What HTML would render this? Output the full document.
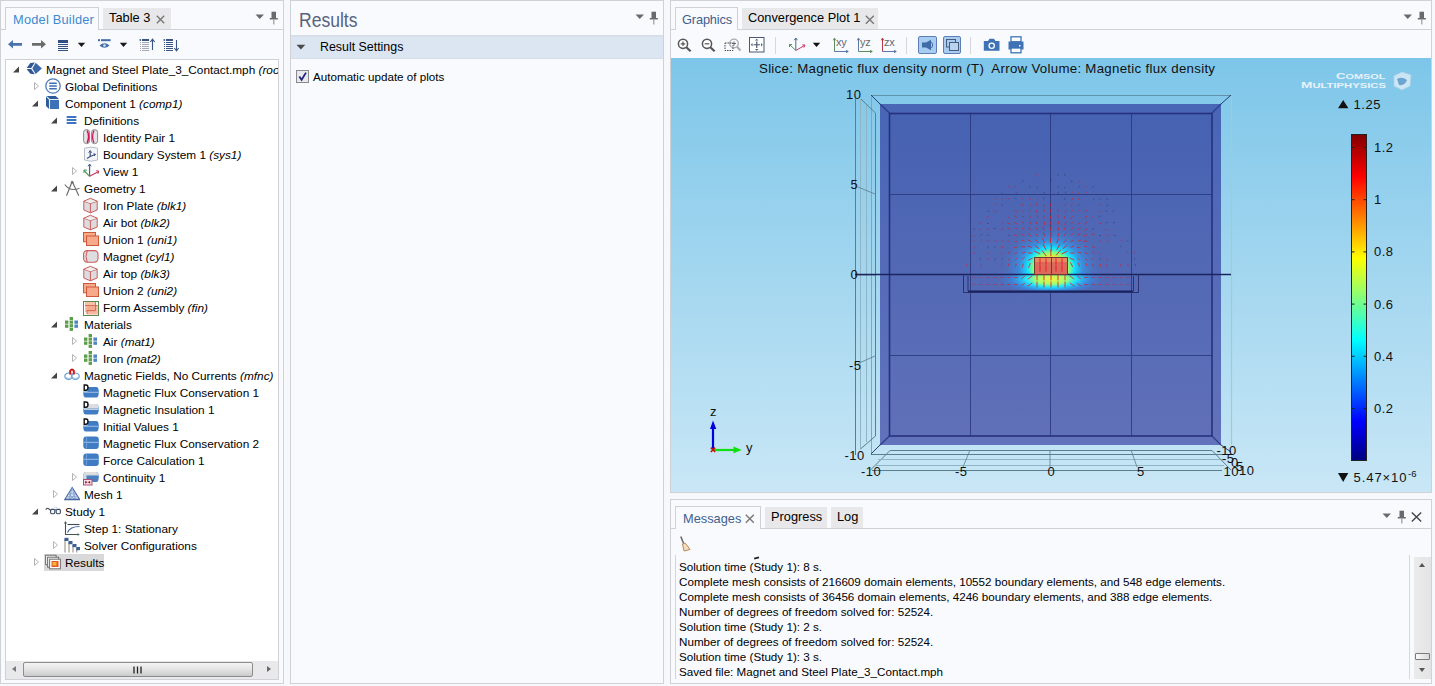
<!DOCTYPE html>
<html><head><meta charset="utf-8">
<style>
*{margin:0;padding:0;box-sizing:border-box}
html,body{width:1435px;height:686px;overflow:hidden;background:#f7f8fc;font-family:"Liberation Sans",sans-serif;font-size:11.65px;color:#000}
.abs{position:absolute}
.panel{position:absolute;border:1px solid #cfd1d7;background:#f9fafe}
.tabline{position:absolute;height:1px;background:#cfd1d7}
.tab{position:absolute;border:1px solid #cfd1d7;border-bottom:none;background:#f9fafe;font-size:12.8px;white-space:nowrap}
.itab{position:absolute;background:#e8e8ea;font-size:12.8px;white-space:nowrap}
.t{position:absolute;white-space:nowrap;line-height:15px}
.row{position:absolute;height:17px;line-height:17px;white-space:nowrap;font-size:11.8px}
i{font-style:italic}
svg{position:absolute;overflow:visible}
</style></head><body>
<svg width="0" height="0" style="position:absolute;left:0;top:0">
<defs>
<symbol id="i-root" viewBox="0 0 16 17">
 <path d="M0.6 6.9L4.4 2L8.8 1.5L5.2 6.9Z" fill="#2f5693"/>
 <path d="M0.6 7.9L5.2 7.9L8.8 13.3L4.4 12.8Z" fill="#2f5693"/>
 <path d="M6.3 7.4L9.7 1.8L15.9 7.4L9.7 13Z" fill="#3a67a8"/>
</symbol>
<symbol id="i-glob" viewBox="0 0 16 17">
 <circle cx="8" cy="8" r="7.2" fill="#fff" stroke="#4d7ab9" stroke-width="1.3"/>
 <path d="M4.2 5.3H11.8M4.2 8H11.8M4.2 10.7H11.8" stroke="#3d70b6" stroke-width="1.6"/>
</symbol>
<symbol id="i-comp" viewBox="0 0 16 17">
 <path d="M1 1H10.7L13.9 4V13.9H4L1 11Z" fill="#2f5a98"/>
 <rect x="5.1" y="5.1" width="8.8" height="8.8" fill="#3d72ba"/>
 <path d="M1.4 1.4L4.5 4.5H13.9M4.5 4.5V13.9" stroke="#e6f0fa" stroke-width="1.1" fill="none"/>
</symbol>
<symbol id="i-defs" viewBox="0 0 16 17">
 <path d="M2.7 5H12.4M2.7 8H12.4M2.7 11H12.4" stroke="#3d74bd" stroke-width="1.8"/>
</symbol>
<symbol id="i-idp" viewBox="0 0 16 17">
 <rect x="0.6" y="0.6" width="6" height="14" rx="2.8" fill="#e4e4e6" stroke="#888" stroke-width="1"/>
 <rect x="8.6" y="0.6" width="6" height="14" rx="2.8" fill="#e4e4e6" stroke="#888" stroke-width="1"/>
 <path d="M4.2 1.5Q7 7.6 4.2 13.8" stroke="#d4145a" stroke-width="1.6" fill="none"/>
 <path d="M11 1.5Q8.2 7.6 11 13.8" stroke="#d4145a" stroke-width="1.3" fill="none"/>
</symbol>
<symbol id="i-bsys" viewBox="0 0 16 17">
 <path d="M1.5 2.2Q8 0 14.5 2.2V14Q8 16.5 1.5 14Z" fill="#f4f6fa" stroke="#b6bcc6" stroke-width="1"/>
 <path d="M4 12.5L7.2 10.5V5.5M7.2 10.5L12 8.5" stroke="#3b4f80" stroke-width="1.2" fill="none"/>
 <path d="M5.7 6.7L7.2 4.5L8.7 6.7M10.5 7.7L12.5 8.3L11.2 10" stroke="#3b4f80" stroke-width="1" fill="none"/>
</symbol>
<symbol id="i-view" viewBox="0 0 16 17">
 <path d="M6.6 13.3V1.5" stroke="#4a6694" stroke-width="1.2"/>
 <path d="M5 3.3L6.6 1L8.2 3.3" stroke="#4a6694" stroke-width="1" fill="none"/>
 <path d="M6.6 13.3L1 7.5" stroke="#4f9a5a" stroke-width="1.2"/>
 <path d="M1 10L1 7L4 7.2" stroke="#4f9a5a" stroke-width="1" fill="none"/>
 <path d="M6.6 13.3L16 8.3" stroke="#c83c64" stroke-width="1.2"/>
 <path d="M13.2 7.6L16 8.3L14.8 10.8" stroke="#c83c64" stroke-width="1" fill="none"/>
</symbol>
<symbol id="i-geom" viewBox="0 0 16 17">
 <path d="M8.2 1.5L2.5 15.8M8.2 1.5L14.8 15.8" stroke="#707070" stroke-width="1.2" fill="none"/>
 <path d="M0.8 4.5Q6 12 15.5 8.2" stroke="#707070" stroke-width="1.1" fill="none"/>
 <circle cx="8.2" cy="2.2" r="1.3" fill="#707070"/>
</symbol>
<symbol id="i-blk" viewBox="0 0 16 17">
 <path d="M0.8 4.2L7.4 1.3L14.2 4.2V13L7.4 15.8L0.8 13Z" fill="#dcdcde" stroke="#cc5c5c" stroke-width="1"/>
 <path d="M0.8 4.2L7.4 6.6L14.2 4.2M7.4 6.6V15.8" stroke="#cc5c5c" stroke-width="1" fill="none"/>
 <path d="M1.8 4.6L7.4 2.3L13.2 4.6L7.4 6.2Z" fill="#eeeeef"/>
</symbol>
<symbol id="i-uni" viewBox="0 0 16 17">
 <rect x="0.5" y="1.5" width="12" height="9.3" fill="#f6aa8a" stroke="#d0583a" stroke-width="1"/>
 <rect x="3.5" y="5" width="12" height="9.5" fill="#f6aa8a" stroke="#d0583a" stroke-width="1"/>
</symbol>
<symbol id="i-cyl" viewBox="0 0 16 17">
 <rect x="0.6" y="2.6" width="14.4" height="11.6" rx="3.6" fill="#dedee0" stroke="#cc5c5c" stroke-width="1.1"/>
 <path d="M4.2 2.8Q1.8 8.4 4.2 14" stroke="#cc5c5c" stroke-width="1" fill="none"/>
</symbol>
<symbol id="i-fin" viewBox="0 0 16 17">
 <rect x="0.5" y="2.5" width="15" height="14" fill="#fffdf8" stroke="#5a8a52" stroke-width="1"/>
 <rect x="2" y="3" width="10.5" height="10" fill="#f8c0a8"/>
 <rect x="3.8" y="6" width="11" height="9.5" fill="#f4a48c" opacity="0.8"/>
 <path d="M2 6.5H14.5M3.5 11.5H12.5M12.5 3V11.5M4 12V15" stroke="#cf6a4e" stroke-width="0.9" fill="none"/>
</symbol>
<symbol id="i-mat" viewBox="0 0 16 17">
 <g fill="#5c9e4a"><rect x="1" y="4.5" width="3.4" height="3.3"/><rect x="1" y="8.5" width="3.4" height="3.3"/>
 <rect x="5.6" y="1" width="3.4" height="3.1"/><rect x="5.6" y="4.6" width="3.4" height="3.1"/><rect x="5.6" y="8.2" width="3.4" height="3.1"/><rect x="5.6" y="11.8" width="3.4" height="3.1"/></g>
 <g fill="#4f86c0"><rect x="10.4" y="4.5" width="3.6" height="3.3"/><rect x="10.4" y="8.5" width="3.6" height="3.3"/></g>
</symbol>
<symbol id="i-mfnc" viewBox="0 0 16 17">
 <ellipse cx="4.6" cy="9.2" rx="3.8" ry="3.2" fill="#fff" stroke="#6a9dd0" stroke-width="1.2"/>
 <ellipse cx="11.4" cy="9.2" rx="3.8" ry="3.2" fill="#fff" stroke="#6a9dd0" stroke-width="1.2"/>
 <path d="M1.5 10.5Q4.6 12.5 8 10.5Q11.4 12.5 14.5 10.5" stroke="#9cc0e6" stroke-width="1" fill="none"/>
 <path d="M6.2 7.5V3.8Q8 1 9.8 3.8V7.5" stroke="#d01818" stroke-width="2" fill="none"/>
 <path d="M8 7V11" stroke="#6a9dd0" stroke-width="1"/>
</symbol>
<symbol id="i-fd" viewBox="0 0 16 17">
 <path d="M4.5 3H13.2Q15.8 3 15.8 8Q15.8 13.6 13.2 13.6H2.8Q0.3 13.6 0.3 9.5V7.5H4.5Z" fill="#3f7cc3"/>
 <path d="M0.8 8.3H15.5" stroke="#a9c6ea" stroke-width="0.9"/>
 <path d="M1.2 1H3Q5 1 5 3.6Q5 6.3 3 6.3H1.2Z" fill="none" stroke="#111" stroke-width="1.4"/>
</symbol>
<symbol id="i-fdi" viewBox="0 0 16 17">
 <path d="M4.5 3H13.2Q15.8 3 15.8 8Q15.8 13.6 13.2 13.6H2.8Q0.3 13.6 0.3 9.5V7.5H4.5Z" fill="#3f7cc3"/>
 <path d="M4.5 3H13.2Q15.8 3 15.8 7.4H0.3V7.3H4.5Z" fill="#dcdde0"/>
 <path d="M0.8 8.3H15.5" stroke="#f0f0f0" stroke-width="0.9"/>
 <path d="M1.2 1H3Q5 1 5 3.6Q5 6.3 3 6.3H1.2Z" fill="none" stroke="#111" stroke-width="1.4"/>
</symbol>
<symbol id="i-fb" viewBox="0 0 16 17">
 <rect x="0.3" y="1.5" width="15.5" height="12.5" rx="3" fill="#3f7cc3"/>
 <path d="M0.8 7.3H15.5" stroke="#a9c6ea" stroke-width="0.9"/>
 <path d="M3.5 2V13.5" stroke="#7aa6dc" stroke-width="0.8"/>
</symbol>
<symbol id="i-cont" viewBox="0 0 16 17">
 <path d="M2.5 3H13.2Q15.8 3 15.8 8Q15.8 13 13.2 13H2.5Q0.3 13 0.3 8Q0.3 3 2.5 3Z" fill="#4a80c0"/>
 <path d="M2.5 3H13.2Q15.8 3 15.8 6.5H3.5V13H2.5Q0.3 13 0.3 8Q0.3 3 2.5 3Z" fill="#d4d9e0"/>
 <path d="M3 4.2H13" stroke="#efe8d8" stroke-width="1"/>
 <rect x="0.5" y="10.5" width="8.5" height="5.5" fill="#fbe0e6" stroke="#a85070" stroke-width="1"/>
 <path d="M2.2 11.8L4.6 13.25L2.2 14.7ZM7.2 11.8L4.8 13.25L7.2 14.7Z" fill="#8a1838"/>
</symbol>
<symbol id="i-mesh" viewBox="0 0 16 17">
 <path d="M8.2 1.5L15.8 13.8H0.6Z" fill="#d4e2f4" stroke="#46629e" stroke-width="1.1"/>
 <path d="M4.4 7.7H12M2.5 10.8H14M8.2 1.5L5 13.8M8.2 1.5L11.4 13.8M4.4 7.7L11.4 13.8M12 7.7L5 13.8" stroke="#7e9ccc" stroke-width="0.8" fill="none"/>
 <path d="M1 13.3H15.4" stroke="#46629e" stroke-width="1.2"/>
</symbol>
<symbol id="i-study" viewBox="0 0 16 17">
 <path d="M0.8 6.8Q1.8 4.8 3.2 5.6L6 7.4" stroke="#4a5468" stroke-width="1.2" fill="none"/>
 <rect x="5.6" y="6.4" width="4.2" height="4.4" rx="1.2" fill="#f4f8fc" stroke="#3e4a5e" stroke-width="1.1"/>
 <rect x="11.2" y="6.4" width="4.2" height="4.4" rx="1.2" fill="#f4f8fc" stroke="#3e4a5e" stroke-width="1.1"/>
 <path d="M9.8 7.6Q10.5 5.5 11.2 7.6" stroke="#5a7a9e" stroke-width="1.1" fill="none"/>
 <path d="M9.6 5L10.8 3.8L12 5" stroke="#b8d0e8" stroke-width="1" fill="none"/>
</symbol>
<symbol id="i-step" viewBox="0 0 16 17">
 <path d="M1.5 2V14.5H15" stroke="#46544e" stroke-width="1.1" fill="none"/>
 <path d="M0 3.4L1.5 1L3 3.4Z" fill="#46544e"/>
 <path d="M13.5 13L15.9 14.5L13.5 16Z" fill="#5a7a6a"/>
 <path d="M3.5 4.5H15.5" stroke="#3e4a58" stroke-width="1.1"/>
 <path d="M3.5 12.5Q6 6.5 15.5 6.5" stroke="#4a68a0" stroke-width="1.2" fill="none"/>
</symbol>
<symbol id="i-solv" viewBox="0 0 16 17">
 <path d="M1 2V15.5M5 5V15.5M9 8V15.5M12.8 11V15.5" stroke="#8c8478" stroke-width="1"/>
 <g fill="#3d5f94"><rect x="0.5" y="0.8" width="4" height="3.2"/><rect x="4.5" y="4" width="4" height="3.2"/><rect x="8.5" y="7" width="4" height="3.2"/><rect x="12.3" y="10" width="3.8" height="3.2"/></g>
</symbol>
<symbol id="i-res" viewBox="0 0 16 17">
 <rect x="0.6" y="1.2" width="10.5" height="9.5" fill="#f4f4f4" stroke="#707070" stroke-width="1"/>
 <rect x="2.6" y="3.2" width="11" height="10" fill="#f4f4f4" stroke="#707070" stroke-width="1"/>
 <rect x="4.6" y="5.2" width="10.8" height="9.6" fill="#fff" stroke="#707070" stroke-width="1"/>
 <rect x="6.5" y="7" width="7" height="6" fill="#e8552a"/>
 <rect x="7.5" y="8" width="4" height="3.5" fill="#f8b830"/>
</symbol>
</defs></svg>


<!-- ============ MODEL BUILDER PANEL ============ -->
<div class="panel" style="left:0;top:0;width:284px;height:684px"></div>
<div class="tabline" style="left:1px;top:29px;width:282px"></div>
<div class="tab" style="left:5px;top:7px;width:94px;height:23px;color:#3b8bd0"><span class="abs" style="left:7px;top:4px;letter-spacing:0.22px">Model Builder</span></div>
<div class="itab" style="left:103px;top:8px;width:68px;height:21px"><span class="abs" style="left:6px;top:2px">Table 3</span></div>

<!-- tree box -->
<div class="abs" style="left:5px;top:59px;width:274px;height:621px;border:1px solid #cfd1d7;background:#fff"></div>

<div class="abs" style="left:44px;top:554px;width:60px;height:17px;background:#d9d9db"></div>
<div class="abs" style="left:0;top:0;width:278px;height:661px;overflow:hidden">
<svg style="left:12px;top:65px" width="8" height="8"><path d="M7 1.5V7.5H1Z" fill="#454545"/></svg>
<svg style="left:26px;top:61px" width="16" height="17"><use href="#i-root"/></svg>
<div class="row" style="left:46px;top:61.5px">Magnet and Steel Plate_3_Contact.mph<i> (root)</i></div>
<svg style="left:33px;top:81px" width="8" height="10"><path d="M1.5 1.5L5.5 5L1.5 8.5Z" fill="#fff" stroke="#b4b4b4" stroke-width="1"/></svg>
<svg style="left:45px;top:78px" width="16" height="17"><use href="#i-glob"/></svg>
<div class="row" style="left:65px;top:78.5px">Global Definitions</div>
<svg style="left:31px;top:99px" width="8" height="8"><path d="M7 1.5V7.5H1Z" fill="#454545"/></svg>
<svg style="left:45px;top:95px" width="16" height="17"><use href="#i-comp"/></svg>
<div class="row" style="left:65px;top:95.5px">Component 1<i> (comp1)</i></div>
<svg style="left:50px;top:116px" width="8" height="8"><path d="M7 1.5V7.5H1Z" fill="#454545"/></svg>
<svg style="left:64px;top:112px" width="16" height="17"><use href="#i-defs"/></svg>
<div class="row" style="left:84px;top:112.5px">Definitions</div>
<svg style="left:83px;top:129px" width="16" height="17"><use href="#i-idp"/></svg>
<div class="row" style="left:103px;top:129.5px">Identity Pair 1</div>
<svg style="left:83px;top:146px" width="16" height="17"><use href="#i-bsys"/></svg>
<div class="row" style="left:103px;top:146.5px">Boundary System 1<i> (sys1)</i></div>
<svg style="left:71px;top:166px" width="8" height="10"><path d="M1.5 1.5L5.5 5L1.5 8.5Z" fill="#fff" stroke="#b4b4b4" stroke-width="1"/></svg>
<svg style="left:83px;top:163px" width="16" height="17"><use href="#i-view"/></svg>
<div class="row" style="left:103px;top:163.5px">View 1</div>
<svg style="left:50px;top:184px" width="8" height="8"><path d="M7 1.5V7.5H1Z" fill="#454545"/></svg>
<svg style="left:64px;top:180px" width="16" height="17"><use href="#i-geom"/></svg>
<div class="row" style="left:84px;top:180.5px">Geometry 1</div>
<svg style="left:83px;top:197px" width="16" height="17"><use href="#i-blk"/></svg>
<div class="row" style="left:103px;top:197.5px">Iron Plate<i> (blk1)</i></div>
<svg style="left:83px;top:214px" width="16" height="17"><use href="#i-blk"/></svg>
<div class="row" style="left:103px;top:214.5px">Air bot<i> (blk2)</i></div>
<svg style="left:83px;top:231px" width="16" height="17"><use href="#i-uni"/></svg>
<div class="row" style="left:103px;top:231.5px">Union 1<i> (uni1)</i></div>
<svg style="left:83px;top:248px" width="16" height="17"><use href="#i-cyl"/></svg>
<div class="row" style="left:103px;top:248.5px">Magnet<i> (cyl1)</i></div>
<svg style="left:83px;top:265px" width="16" height="17"><use href="#i-blk"/></svg>
<div class="row" style="left:103px;top:265.5px">Air top<i> (blk3)</i></div>
<svg style="left:83px;top:282px" width="16" height="17"><use href="#i-uni"/></svg>
<div class="row" style="left:103px;top:282.5px">Union 2<i> (uni2)</i></div>
<svg style="left:83px;top:299px" width="16" height="17"><use href="#i-fin"/></svg>
<div class="row" style="left:103px;top:299.5px">Form Assembly<i> (fin)</i></div>
<svg style="left:50px;top:320px" width="8" height="8"><path d="M7 1.5V7.5H1Z" fill="#454545"/></svg>
<svg style="left:64px;top:316px" width="16" height="17"><use href="#i-mat"/></svg>
<div class="row" style="left:84px;top:316.5px">Materials</div>
<svg style="left:71px;top:336px" width="8" height="10"><path d="M1.5 1.5L5.5 5L1.5 8.5Z" fill="#fff" stroke="#b4b4b4" stroke-width="1"/></svg>
<svg style="left:83px;top:333px" width="16" height="17"><use href="#i-mat"/></svg>
<div class="row" style="left:103px;top:333.5px">Air<i> (mat1)</i></div>
<svg style="left:71px;top:353px" width="8" height="10"><path d="M1.5 1.5L5.5 5L1.5 8.5Z" fill="#fff" stroke="#b4b4b4" stroke-width="1"/></svg>
<svg style="left:83px;top:350px" width="16" height="17"><use href="#i-mat"/></svg>
<div class="row" style="left:103px;top:350.5px">Iron<i> (mat2)</i></div>
<svg style="left:50px;top:371px" width="8" height="8"><path d="M7 1.5V7.5H1Z" fill="#454545"/></svg>
<svg style="left:64px;top:367px" width="16" height="17"><use href="#i-mfnc"/></svg>
<div class="row" style="left:84px;top:367.5px">Magnetic Fields, No Currents<i> (mfnc)</i></div>
<svg style="left:83px;top:384px" width="16" height="17"><use href="#i-fd"/></svg>
<div class="row" style="left:103px;top:384.5px">Magnetic Flux Conservation 1</div>
<svg style="left:83px;top:401px" width="16" height="17"><use href="#i-fdi"/></svg>
<div class="row" style="left:103px;top:401.5px">Magnetic Insulation 1</div>
<svg style="left:83px;top:418px" width="16" height="17"><use href="#i-fd"/></svg>
<div class="row" style="left:103px;top:418.5px">Initial Values 1</div>
<svg style="left:83px;top:435px" width="16" height="17"><use href="#i-fb"/></svg>
<div class="row" style="left:103px;top:435.5px">Magnetic Flux Conservation 2</div>
<svg style="left:83px;top:452px" width="16" height="17"><use href="#i-fb"/></svg>
<div class="row" style="left:103px;top:452.5px">Force Calculation 1</div>
<svg style="left:71px;top:472px" width="8" height="10"><path d="M1.5 1.5L5.5 5L1.5 8.5Z" fill="#fff" stroke="#b4b4b4" stroke-width="1"/></svg>
<svg style="left:83px;top:469px" width="16" height="17"><use href="#i-cont"/></svg>
<div class="row" style="left:103px;top:469.5px">Continuity 1</div>
<svg style="left:52px;top:489px" width="8" height="10"><path d="M1.5 1.5L5.5 5L1.5 8.5Z" fill="#fff" stroke="#b4b4b4" stroke-width="1"/></svg>
<svg style="left:64px;top:486px" width="16" height="17"><use href="#i-mesh"/></svg>
<div class="row" style="left:84px;top:486.5px">Mesh 1</div>
<svg style="left:31px;top:507px" width="8" height="8"><path d="M7 1.5V7.5H1Z" fill="#454545"/></svg>
<svg style="left:45px;top:503px" width="16" height="17"><use href="#i-study"/></svg>
<div class="row" style="left:65px;top:503.5px">Study 1</div>
<svg style="left:64px;top:520px" width="16" height="17"><use href="#i-step"/></svg>
<div class="row" style="left:84px;top:520.5px">Step 1: Stationary</div>
<svg style="left:52px;top:540px" width="8" height="10"><path d="M1.5 1.5L5.5 5L1.5 8.5Z" fill="#fff" stroke="#b4b4b4" stroke-width="1"/></svg>
<svg style="left:64px;top:537px" width="16" height="17"><use href="#i-solv"/></svg>
<div class="row" style="left:84px;top:537.5px">Solver Configurations</div>
<svg style="left:33px;top:557px" width="8" height="10"><path d="M1.5 1.5L5.5 5L1.5 8.5Z" fill="#fff" stroke="#b4b4b4" stroke-width="1"/></svg>
<svg style="left:45px;top:554px" width="16" height="17"><use href="#i-res"/></svg>
<div class="row" style="left:65px;top:554.5px">Results</div>
</div>
<!-- tab X for Table 3 -->
<svg style="left:156px;top:15px" width="9" height="9"><path d="M0.8 0.8L8.2 8.2M8.2 0.8L0.8 8.2" stroke="#777" stroke-width="1.4"/></svg>
<!-- dropdown + pin -->
<svg style="left:255px;top:14px" width="10" height="6"><path d="M0.5 0.5H9L4.75 5Z" fill="#6a6a6a"/></svg>
<svg style="left:269px;top:11px" width="10" height="14"><rect x="2.5" y="0.7" width="4.5" height="6.8" fill="#6a6a6a"/><rect x="0.8" y="7" width="8" height="1.5" fill="#6a6a6a"/><rect x="4.2" y="8.5" width="1.2" height="5" fill="#9a9a9a"/></svg>
<!-- toolbar -->
<svg style="left:7px;top:39px" width="16" height="11"><path d="M1 5.3L6 1V3.9H15V6.7H6V9.6Z" fill="#4a72ac"/></svg>
<svg style="left:31px;top:39px" width="16" height="11"><path d="M15 5.3L10 1V3.9H1V6.7H10V9.6Z" fill="#6b6b6b"/></svg>
<svg style="left:57px;top:39px" width="12" height="13"><path d="M1 3.5H11M1 5.5H11M1 7.5H11M1 9.5H11M1 11.5H11" stroke="#2f5080" stroke-width="1"/><rect x="1" y="1" width="10" height="2" fill="#2f5080"/></svg>
<svg style="left:77px;top:42px" width="9" height="6"><path d="M0.8 0.8H8.2L4.5 5Z" fill="#1a1a1a"/></svg>
<svg style="left:97px;top:38px" width="15" height="11"><rect x="1" y="1.2" width="2" height="2" fill="#3f6ca8"/><rect x="4" y="1.2" width="9.6" height="2" fill="#3f6ca8"/><path d="M2.5 7.5Q7.5 3 12.5 7.5Q7.5 12 2.5 7.5Z" fill="#3f6ca8"/><circle cx="7.5" cy="7.5" r="1.3" fill="#dde6f2"/></svg>
<svg style="left:119px;top:42px" width="9" height="6"><path d="M0.8 0.8H8.2L4.5 5Z" fill="#1a1a1a"/></svg>
<svg style="left:139px;top:38px" width="17" height="14"><rect x="0.5" y="1.2" width="1.6" height="1.6" fill="#3a5580"/><rect x="3" y="1" width="7" height="2" fill="#3a5580"/><path d="M3 4.5H10M3 6.5H10M3 8.5H10M3 10.5H10M3 12.5H10" stroke="#a3abb8" stroke-width="1"/><path d="M1 4.5H2M1 6.5H2M1 8.5H2M1 10.5H2M1 12.5H2" stroke="#a3abb8" stroke-width="1"/><path d="M13.5 12V1.5M11.3 4L13.5 1.2L15.7 4" stroke="#3a5580" stroke-width="1.1" fill="none"/></svg>
<svg style="left:163px;top:38px" width="17" height="14"><rect x="0.5" y="1.2" width="1.6" height="1.6" fill="#3a5580"/><rect x="3" y="1" width="7" height="2" fill="#3a5580"/><path d="M3 4.5H10M3 6.5H10M3 8.5H10M3 10.5H10M3 12.5H10" stroke="#3a5580" stroke-width="1"/><path d="M1 4.5H2M1 6.5H2M1 8.5H2M1 10.5H2M1 12.5H2" stroke="#3a5580" stroke-width="1"/><path d="M13.5 2V12.5M11.3 10L13.5 12.8L15.7 10" stroke="#3a5580" stroke-width="1.1" fill="none"/></svg>
<!-- tree h-scrollbar -->
<div class="abs" style="left:6px;top:661px;width:272px;height:18px;background:#e9e9eb"></div>
<div class="abs" style="left:23px;top:662px;width:230px;height:15px;border:1px solid #8c8c8c;border-radius:2px;background:linear-gradient(#f4f4f4,#e6e6e6 45%,#c9cacc)"></div>
<svg style="left:133px;top:666px" width="9" height="8"><path d="M1 0.5V7.5M4.5 0.5V7.5M8 0.5V7.5" stroke="#222" stroke-width="1.3"/></svg>
<svg style="left:11px;top:665px" width="6" height="8"><path d="M5 1V7L1 4Z" fill="#7a7a7a"/></svg>
<svg style="left:266px;top:665px" width="6" height="8"><path d="M1 1V7L5 4Z" fill="#6a6a6a"/></svg>

<!-- ============ RESULTS PANEL ============ -->
<div class="panel" style="left:290px;top:0;width:374px;height:684px"></div>
<div class="abs" style="left:299px;top:8px;font-size:21px;line-height:24px;color:#56637e;white-space:nowrap;transform:scaleX(0.835);transform-origin:0 0">Results</div>
<div class="abs" style="left:291px;top:35px;width:372px;height:24px;background:#dce6f3;border-top:2px solid #d6dfea;border-bottom:1px solid #d8dee8"></div>
<div class="t" style="left:320px;top:40px;font-size:12.4px">Result Settings</div>
<div class="abs" style="left:296px;top:70px;width:13px;height:13px;border:1px solid #8a8a8a;background:#e8e8f0"></div>
<div class="t" style="left:313px;top:69px">Automatic update of plots</div>

<svg style="left:635px;top:14px" width="10" height="6"><path d="M0.5 0.5H9L4.75 5Z" fill="#6a6a6a"/></svg>
<svg style="left:649px;top:11px" width="10" height="14"><rect x="2.5" y="0.7" width="4.5" height="6.8" fill="#6a6a6a"/><rect x="0.8" y="7" width="8" height="1.5" fill="#6a6a6a"/><rect x="4.2" y="8.5" width="1.2" height="5" fill="#9a9a9a"/></svg>
<svg style="left:296px;top:44px" width="10" height="7"><path d="M0.5 0.8H9.3L4.9 5.6Z" fill="#4a4a4a"/></svg>
<svg style="left:297px;top:71px" width="11" height="11"><path d="M2.3 5.5L4.6 8.8L9 1.6" stroke="#26267a" stroke-width="1.8" fill="none"/></svg>

<!-- ============ GRAPHICS PANEL ============ -->
<div class="panel" style="left:670px;top:0;width:762px;height:493px"></div>
<div class="tabline" style="left:671px;top:29px;width:760px"></div>
<div class="tab" style="left:675px;top:7px;width:63px;height:23px;color:#3f5f8c"><span class="abs" style="left:6px;top:4px;letter-spacing:-0.15px">Graphics</span></div>
<div class="itab" style="left:742px;top:8px;width:136px;height:21px"><span class="abs" style="left:6px;top:2px">Convergence Plot 1</span></div>
<svg style="left:671px;top:58px" width="760" height="434" viewBox="671 58 760 434">
<defs>
<linearGradient id="bg" x1="0" y1="0" x2="0" y2="1"><stop offset="0" stop-color="#7dc6e9"/><stop offset="1" stop-color="#c9e7f6"/></linearGradient>
<linearGradient id="face" x1="0" y1="0" x2="0" y2="1"><stop offset="0" stop-color="#4662b2"/><stop offset="1" stop-color="#6070b8"/></linearGradient>
<linearGradient id="slab" x1="0" y1="0" x2="0" y2="1"><stop offset="0" stop-color="#4865b6"/><stop offset="1" stop-color="#6272bb"/></linearGradient>
<linearGradient id="cbar" x1="0" y1="1" x2="0" y2="0">
 <stop offset="0" stop-color="#000080"/><stop offset="0.12" stop-color="#0000ff"/><stop offset="0.37" stop-color="#00ffff"/>
 <stop offset="0.62" stop-color="#ffff00"/><stop offset="0.87" stop-color="#ff0000"/><stop offset="1" stop-color="#800000"/></linearGradient>
<radialGradient id="heatTop" cx="1051" cy="268" r="52" gradientUnits="userSpaceOnUse" gradientTransform="translate(1051 268) scale(1 0.85) translate(-1051 -268)">
 <stop offset="0.24" stop-color="#ffe030"/>
 <stop offset="0.34" stop-color="#90ff70"/>
 <stop offset="0.45" stop-color="#10e4ff"/>
 <stop offset="0.62" stop-color="#30a0f4" stop-opacity="0.6"/>
 <stop offset="1" stop-color="#4a66b4" stop-opacity="0"/></radialGradient>
<radialGradient id="heatBot" cx="1051" cy="279" r="56" gradientUnits="userSpaceOnUse" gradientTransform="translate(1051 279) scale(1 0.32) translate(-1051 -279)">
 <stop offset="0" stop-color="#f4f040"/>
 <stop offset="0.28" stop-color="#a0ff70"/>
 <stop offset="0.45" stop-color="#20e4ff"/>
 <stop offset="0.7" stop-color="#2a98f4" stop-opacity="0.55"/>
 <stop offset="1" stop-color="#4a66b4" stop-opacity="0"/></radialGradient>
<clipPath id="abv"><rect x="889" y="113" width="323" height="161"/></clipPath>
<clipPath id="blw"><rect x="965" y="275" width="172" height="17"/></clipPath>
</defs>
<rect x="671" y="58" width="760" height="434" fill="url(#bg)"/>
<text x="759" y="73" font-family="Liberation Sans" font-size="13.3" textLength="456" lengthAdjust="spacing" fill="#111" xml:space="preserve">Slice: Magnetic flux density norm (T)  Arrow Volume: Magnetic flux density</text>
<g fill="#e6f3fb" font-family="Liberation Sans" font-weight="bold">
<text x="1336" y="79" font-size="8.5" textLength="49.5" lengthAdjust="spacingAndGlyphs">C<tspan font-size="7">OMSOL</tspan></text>
<text x="1301" y="88" font-size="8.5" textLength="85" lengthAdjust="spacingAndGlyphs">M<tspan font-size="7">ULTIPHYSICS</tspan></text></g>
<g opacity="0.85"><path d="M1394 76L1402 72L1411 75L1410 86L1402 90L1394 86Z" fill="#d8ecf8" stroke="#b8d4e6" stroke-width="0.8"/><path d="M1397 79Q1402 76 1407 80Q1405 86 1399 85Z" fill="#6aa0cc"/></g>
<path d="M871.5 95.5H1231.5" stroke="#5f93aa" stroke-width="1.2" fill="none"/>
<path d="M1231.5 95.5V445" stroke="#a6c8cf" stroke-width="1.2" fill="none"/>
<path d="M871.5 95.5V454.5" stroke="#7aa8bc" stroke-width="1" fill="none"/>
<path d="M855.5 98V455M875.5 113V436" stroke="#5a7e8c" stroke-width="1" fill="none"/>
<path d="M860.5 99V449M866.5 104V442" stroke="#8fb5c4" stroke-width="1" fill="none"/>
<path d="M875.5 436L860.5 449M875.5 113L861 99" stroke="#5a7e8c" stroke-width="1" fill="none"/>
<path d="M890 450.5H1212M871 454.5H1231M872 470.5H1222M890 450.5L870 470.5" stroke="#5a7e8c" stroke-width="1" fill="none"/>
<path d="M878 459.5H1226M875 465.5H1224" stroke="#8fb5c4" stroke-width="1" fill="none"/>
<path d="M1212 450.5L1231 470" stroke="#5a7e8c" stroke-width="1" fill="none"/>
<path d="M875 356L858 363.5M875 194L858 187M875 275L858 275M970 450L963 467M1050 450L1050 467M1131 450L1137 467" stroke="#5a7e8c" stroke-width="0.8" fill="none"/>
<path d="M880 104H1221V445H880Z" fill="url(#slab)"/>
<path d="M880 104L889.5 113M1221 104L1212 113M880 445L889.5 436M1221 445L1212 436" stroke="#2a3f88" stroke-width="1.2"/>
<path d="M871 95L880 104M1231 95L1221 104M871 454L880 445M1231 452L1221 445" stroke="#25407a" stroke-width="1"/>
<rect x="889.5" y="113.5" width="322.5" height="322.5" fill="url(#face)" stroke="#26317e" stroke-width="1.6"/>
<path d="M970.5 113V436M1050.5 113V436M1131.5 113V436M889 194.5H1212M889 355.5H1212" stroke="#28357a" stroke-width="1" opacity="0.8"/>
<rect x="889" y="113" width="323" height="161" fill="url(#heatTop)" clip-path="url(#abv)"/>
<rect x="889" y="275" width="323" height="17" fill="url(#heatBot)" clip-path="url(#blw)"/>
<path d="M855 274.5H1231" stroke="#1c2460" stroke-width="1.3"/>
<path d="M963.5 274.5V292.5H1138.5V274.5M968 276V291H1133.5V276" stroke="#2a3070" stroke-width="1" fill="none"/>
<path d="M968 291.5H1133" stroke="#1c2460" stroke-width="1.5"/>
<rect x="1034.5" y="257.5" width="33" height="17" fill="#dc6a5c" stroke="#6a3a30" stroke-width="1"/>
<rect x="1035" y="258" width="32" height="4" fill="#f0a060" opacity="0.6"/>
<path d="M1051.5 258V274" stroke="#5a2a30" stroke-width="0.8"/>
<g stroke-width="0.95" stroke-linecap="round">
<path d="M1037.0 176.0L1036.7 174.4" stroke="#d0203a" opacity="0.55"/>
<path d="M1057.9 175.7L1058.0 174.4" stroke="#28306e" opacity="0.45"/>
<path d="M1064.6 175.5L1064.9 174.3" stroke="#28306e" opacity="0.45"/>
<path d="M1023.1 181.4L1022.5 180.3" stroke="#28306e" opacity="0.45"/>
<path d="M1051.1 181.1L1051.1 179.8" stroke="#28306e" opacity="0.45"/>
<path d="M1071.4 182.0L1071.9 180.7" stroke="#28306e" opacity="0.45"/>
<path d="M1079.0 182.0L1079.8 180.6" stroke="#d0203a" opacity="0.55"/>
<path d="M1009.4 187.5L1008.3 186.3" stroke="#d0203a" opacity="0.55"/>
<path d="M1016.0 187.2L1015.1 185.9" stroke="#d0203a" opacity="0.55"/>
<path d="M1030.3 187.2L1029.8 186.0" stroke="#28306e" opacity="0.45"/>
<path d="M1037.2 188.1L1036.9 186.9" stroke="#28306e" opacity="0.45"/>
<path d="M1058.4 187.5L1058.6 186.2" stroke="#28306e" opacity="0.45"/>
<path d="M1064.7 188.1L1065.1 186.9" stroke="#28306e" opacity="0.45"/>
<path d="M1079.0 187.2L1079.7 186.0" stroke="#28306e" opacity="0.45"/>
<path d="M1085.3 187.7L1086.3 186.4" stroke="#d0203a" opacity="0.55"/>
<path d="M1092.6 187.2L1093.5 186.2" stroke="#28306e" opacity="0.45"/>
<path d="M1002.8 193.9L1001.8 193.1" stroke="#28306e" opacity="0.45"/>
<path d="M1016.9 193.4L1016.1 192.4" stroke="#28306e" opacity="0.45"/>
<path d="M1044.2 193.7L1044.1 192.4" stroke="#28306e" opacity="0.45"/>
<path d="M1058.2 193.4L1058.4 192.1" stroke="#28306e" opacity="0.45"/>
<path d="M1065.2 193.3L1065.6 192.1" stroke="#28306e" opacity="0.45"/>
<path d="M1071.9 193.2L1072.6 191.8" stroke="#d0203a" opacity="0.55"/>
<path d="M1078.1 194.2L1078.9 192.8" stroke="#d0203a" opacity="0.55"/>
<path d="M1085.9 193.1L1086.9 191.9" stroke="#d0203a" opacity="0.55"/>
<path d="M995.6 199.4L994.2 198.6" stroke="#d0203a" opacity="0.55"/>
<path d="M1003.1 199.7L1001.7 198.8" stroke="#d0203a" opacity="0.55"/>
<path d="M1009.1 199.1L1007.9 198.0" stroke="#d0203a" opacity="0.55"/>
<path d="M1016.1 199.0L1015.1 198.0" stroke="#28306e" opacity="0.45"/>
<path d="M1023.2 199.4L1022.3 198.0" stroke="#d0203a" opacity="0.55"/>
<path d="M1030.4 199.7L1029.5 197.7" stroke="#e41a22" opacity="0.67"/>
<path d="M1037.8 199.8L1037.3 198.3" stroke="#d0203a" opacity="0.55"/>
<path d="M1043.9 199.1L1043.7 197.7" stroke="#28306e" opacity="0.45"/>
<path d="M1064.5 199.4L1065.0 198.0" stroke="#28306e" opacity="0.45"/>
<path d="M1071.7 200.2L1072.7 198.3" stroke="#e41a22" opacity="0.66"/>
<path d="M1078.3 199.7L1079.5 197.9" stroke="#e41a22" opacity="0.66"/>
<path d="M1092.9 199.9L1093.9 199.0" stroke="#28306e" opacity="0.45"/>
<path d="M1099.0 199.4L1100.1 198.7" stroke="#28306e" opacity="0.45"/>
<path d="M1106.8 199.4L1108.0 198.8" stroke="#28306e" opacity="0.45"/>
<path d="M996.0 205.0L994.5 204.3" stroke="#d0203a" opacity="0.55"/>
<path d="M1002.4 205.3L1001.3 204.6" stroke="#28306e" opacity="0.45"/>
<path d="M1023.1 205.6L1021.8 203.8" stroke="#e41a22" opacity="0.65"/>
<path d="M1030.6 205.9L1029.9 204.5" stroke="#d0203a" opacity="0.55"/>
<path d="M1037.3 205.6L1036.6 203.5" stroke="#e41a22" opacity="0.68"/>
<path d="M1043.8 206.7L1043.4 204.5" stroke="#e41a22" opacity="0.69"/>
<path d="M1050.4 206.1L1050.4 203.9" stroke="#e41a22" opacity="0.68"/>
<path d="M1065.2 205.7L1065.9 203.6" stroke="#e41a22" opacity="0.66"/>
<path d="M1071.1 206.0L1072.1 204.1" stroke="#e41a22" opacity="0.68"/>
<path d="M1078.1 206.0L1079.0 204.8" stroke="#28306e" opacity="0.45"/>
<path d="M1098.9 205.2L1100.3 204.4" stroke="#d0203a" opacity="0.55"/>
<path d="M1106.7 205.7L1107.9 205.1" stroke="#28306e" opacity="0.45"/>
<path d="M989.1 211.5L987.8 211.2" stroke="#28306e" opacity="0.45"/>
<path d="M995.8 211.5L994.3 211.0" stroke="#d0203a" opacity="0.55"/>
<path d="M1016.6 212.0L1014.9 210.6" stroke="#e41a22" opacity="0.67"/>
<path d="M1023.2 211.8L1022.2 210.6" stroke="#d0203a" opacity="0.55"/>
<path d="M1030.0 211.3L1029.2 209.9" stroke="#d0203a" opacity="0.55"/>
<path d="M1037.1 212.6L1036.2 210.4" stroke="#e41a22" opacity="0.71"/>
<path d="M1044.1 211.6L1043.7 209.5" stroke="#e41a22" opacity="0.66"/>
<path d="M1050.5 211.9L1050.5 209.7" stroke="#e41a22" opacity="0.66"/>
<path d="M1057.5 211.8L1057.9 209.6" stroke="#e41a22" opacity="0.69"/>
<path d="M1065.1 212.3L1065.9 210.3" stroke="#e41a22" opacity="0.67"/>
<path d="M1071.3 212.0L1072.5 210.1" stroke="#e41a22" opacity="0.66"/>
<path d="M1078.3 211.1L1079.3 209.9" stroke="#d0203a" opacity="0.55"/>
<path d="M1085.2 211.9L1086.8 210.4" stroke="#e41a22" opacity="0.67"/>
<path d="M1099.2 211.9L1100.7 211.2" stroke="#d0203a" opacity="0.55"/>
<path d="M1105.8 211.5L1107.1 211.0" stroke="#28306e" opacity="0.45"/>
<path d="M1112.8 211.0L1114.0 210.7" stroke="#28306e" opacity="0.45"/>
<path d="M988.3 216.8L986.8 216.6" stroke="#d0203a" opacity="0.55"/>
<path d="M1009.7 217.9L1008.2 217.2" stroke="#d0203a" opacity="0.55"/>
<path d="M1016.6 217.4L1014.8 216.0" stroke="#e41a22" opacity="0.68"/>
<path d="M1023.7 217.3L1022.8 216.3" stroke="#28306e" opacity="0.45"/>
<path d="M1030.5 217.6L1029.3 215.8" stroke="#e41a22" opacity="0.69"/>
<path d="M1037.9 217.7L1037.1 215.7" stroke="#e41a22" opacity="0.67"/>
<path d="M1044.1 218.1L1043.5 215.7" stroke="#e41a22" opacity="0.72"/>
<path d="M1050.7 218.6L1050.6 216.1" stroke="#e41a22" opacity="0.72"/>
<path d="M1057.7 218.0L1058.3 215.3" stroke="#e41a22" opacity="0.73"/>
<path d="M1064.3 218.4L1065.2 216.4" stroke="#e41a22" opacity="0.68"/>
<path d="M1071.1 218.2L1072.3 216.4" stroke="#e41a22" opacity="0.67"/>
<path d="M1085.0 217.9L1086.8 216.5" stroke="#e41a22" opacity="0.68"/>
<path d="M1091.9 217.3L1093.3 216.5" stroke="#d0203a" opacity="0.55"/>
<path d="M1098.9 216.7L1100.1 216.2" stroke="#28306e" opacity="0.45"/>
<path d="M981.3 222.9L979.7 223.0" stroke="#d0203a" opacity="0.55"/>
<path d="M988.5 223.5L987.2 223.5" stroke="#28306e" opacity="0.45"/>
<path d="M1003.3 222.9L1001.7 222.5" stroke="#d0203a" opacity="0.55"/>
<path d="M1009.8 223.9L1007.7 223.2" stroke="#e41a22" opacity="0.65"/>
<path d="M1016.7 223.8L1014.8 222.7" stroke="#e41a22" opacity="0.65"/>
<path d="M1023.6 223.1L1021.9 221.7" stroke="#e41a22" opacity="0.70"/>
<path d="M1031.3 224.2L1029.7 222.1" stroke="#e41a22" opacity="0.73"/>
<path d="M1037.0 223.8L1035.9 221.6" stroke="#e41a22" opacity="0.72"/>
<path d="M1044.8 224.8L1044.3 222.2" stroke="#e41a22" opacity="0.73"/>
<path d="M1050.7 224.3L1050.7 221.5" stroke="#e41a22" opacity="0.74"/>
<path d="M1058.2 224.0L1058.9 221.2" stroke="#e41a22" opacity="0.75"/>
<path d="M1064.7 224.6L1065.9 222.2" stroke="#e41a22" opacity="0.74"/>
<path d="M1071.4 223.7L1072.8 221.9" stroke="#e41a22" opacity="0.69"/>
<path d="M1078.0 224.1L1079.7 222.6" stroke="#e41a22" opacity="0.66"/>
<path d="M1084.7 223.9L1086.6 222.7" stroke="#e41a22" opacity="0.65"/>
<path d="M1099.5 223.7L1101.6 223.2" stroke="#e41a22" opacity="0.66"/>
<path d="M1106.1 222.6L1107.4 222.4" stroke="#28306e" opacity="0.45"/>
<path d="M1113.3 222.7L1114.6 222.7" stroke="#28306e" opacity="0.45"/>
<path d="M974.7 228.6L973.5 229.0" stroke="#28306e" opacity="0.45"/>
<path d="M981.5 229.2L979.9 229.6" stroke="#d0203a" opacity="0.55"/>
<path d="M988.8 229.3L987.2 229.5" stroke="#d0203a" opacity="0.55"/>
<path d="M995.4 228.5L994.1 228.5" stroke="#28306e" opacity="0.45"/>
<path d="M1003.6 229.0L1001.4 228.7" stroke="#e41a22" opacity="0.66"/>
<path d="M1010.0 229.0L1007.9 228.4" stroke="#e41a22" opacity="0.67"/>
<path d="M1017.5 229.0L1015.5 228.1" stroke="#e41a22" opacity="0.68"/>
<path d="M1024.1 229.3L1022.2 228.0" stroke="#e41a22" opacity="0.69"/>
<path d="M1030.4 229.5L1028.7 227.8" stroke="#e41a22" opacity="0.71"/>
<path d="M1037.8 230.4L1036.4 228.0" stroke="#e41a22" opacity="0.74"/>
<path d="M1043.9 230.3L1043.0 227.2" stroke="#e41a22" opacity="0.78"/>
<path d="M1050.6 230.3L1050.6 227.3" stroke="#e41a22" opacity="0.76"/>
<path d="M1058.0 230.4L1058.7 227.7" stroke="#e41a22" opacity="0.75"/>
<path d="M1063.8 230.2L1065.2 227.6" stroke="#e41a22" opacity="0.76"/>
<path d="M1071.4 229.4L1073.0 227.6" stroke="#e41a22" opacity="0.71"/>
<path d="M1078.3 229.5L1080.1 228.3" stroke="#e41a22" opacity="0.69"/>
<path d="M1084.8 230.0L1086.8 229.1" stroke="#e41a22" opacity="0.67"/>
<path d="M1092.4 229.0L1093.8 228.6" stroke="#28306e" opacity="0.45"/>
<path d="M1105.6 229.5L1107.2 229.5" stroke="#d0203a" opacity="0.55"/>
<path d="M974.3 235.2L972.8 235.9" stroke="#d0203a" opacity="0.55"/>
<path d="M982.1 234.6L980.9 235.1" stroke="#28306e" opacity="0.45"/>
<path d="M988.2 235.2L987.0 235.5" stroke="#28306e" opacity="0.45"/>
<path d="M1009.9 235.5L1008.6 235.4" stroke="#28306e" opacity="0.45"/>
<path d="M1016.5 235.7L1014.4 235.1" stroke="#e41a22" opacity="0.66"/>
<path d="M1024.3 235.7L1022.0 234.5" stroke="#e41a22" opacity="0.73"/>
<path d="M1030.9 235.9L1028.6 234.0" stroke="#e41a22" opacity="0.76"/>
<path d="M1037.9 236.6L1035.9 233.8" stroke="#e41a22" opacity="0.79"/>
<path d="M1044.5 236.2L1043.3 232.6" stroke="#e41a22" opacity="0.83"/>
<path d="M1051.0 236.7L1051.0 232.7" stroke="#e41a22" opacity="0.85"/>
<path d="M1057.8 236.6L1058.9 233.3" stroke="#e41a22" opacity="0.80"/>
<path d="M1064.1 235.8L1065.8 233.3" stroke="#e41a22" opacity="0.77"/>
<path d="M1070.8 235.5L1073.0 233.6" stroke="#e41a22" opacity="0.75"/>
<path d="M1077.9 235.0L1080.2 233.8" stroke="#e41a22" opacity="0.73"/>
<path d="M1084.4 235.6L1086.6 235.0" stroke="#e41a22" opacity="0.71"/>
<path d="M1091.9 234.6L1094.1 234.3" stroke="#e41a22" opacity="0.66"/>
<path d="M1099.2 235.5L1100.5 235.6" stroke="#28306e" opacity="0.45"/>
<path d="M1106.5 235.2L1108.1 235.5" stroke="#d0203a" opacity="0.55"/>
<path d="M1113.9 235.3L1115.2 235.7" stroke="#28306e" opacity="0.45"/>
<path d="M974.2 241.0L973.0 242.0" stroke="#d0203a" opacity="0.55"/>
<path d="M982.0 240.1L980.7 240.9" stroke="#d0203a" opacity="0.55"/>
<path d="M989.2 240.7L987.7 241.4" stroke="#d0203a" opacity="0.55"/>
<path d="M996.3 240.9L994.8 241.4" stroke="#d0203a" opacity="0.55"/>
<path d="M1003.4 240.9L1001.8 241.3" stroke="#d0203a" opacity="0.55"/>
<path d="M1009.4 241.2L1007.8 241.4" stroke="#d0203a" opacity="0.55"/>
<path d="M1017.3 241.7L1015.0 241.5" stroke="#e41a22" opacity="0.70"/>
<path d="M1024.3 241.1L1022.1 240.4" stroke="#e41a22" opacity="0.71"/>
<path d="M1030.9 241.4L1028.0 239.7" stroke="#e41a22" opacity="0.79"/>
<path d="M1038.3 242.6L1035.5 239.4" stroke="#e41a22" opacity="0.87"/>
<path d="M1044.5 242.8L1042.7 238.6" stroke="#e41a22" opacity="0.90"/>
<path d="M1050.5 242.7L1050.4 238.1" stroke="#e41a22" opacity="0.90"/>
<path d="M1056.8 242.9L1058.3 238.8" stroke="#e41a22" opacity="0.88"/>
<path d="M1063.8 242.5L1066.4 239.7" stroke="#e41a22" opacity="0.83"/>
<path d="M1070.8 241.7L1073.5 240.2" stroke="#e41a22" opacity="0.77"/>
<path d="M1078.4 241.0L1080.7 240.4" stroke="#e41a22" opacity="0.71"/>
<path d="M1084.3 241.3L1086.8 241.1" stroke="#e41a22" opacity="0.72"/>
<path d="M1099.4 240.9L1101.0 241.3" stroke="#d0203a" opacity="0.55"/>
<path d="M1106.8 241.0L1108.3 241.6" stroke="#d0203a" opacity="0.55"/>
<path d="M1120.6 240.0L1122.0 240.8" stroke="#d0203a" opacity="0.55"/>
<path d="M1127.1 240.8L1128.2 241.5" stroke="#28306e" opacity="0.45"/>
<path d="M975.0 246.7L973.9 247.9" stroke="#d0203a" opacity="0.55"/>
<path d="M988.3 246.9L987.3 247.7" stroke="#28306e" opacity="0.45"/>
<path d="M995.3 246.7L994.2 247.4" stroke="#28306e" opacity="0.45"/>
<path d="M1002.7 246.7L1000.7 247.7" stroke="#e41a22" opacity="0.67"/>
<path d="M1017.0 247.1L1014.4 247.5" stroke="#e41a22" opacity="0.73"/>
<path d="M1024.9 246.9L1021.7 246.7" stroke="#e41a22" opacity="0.78"/>
<path d="M1031.7 247.3L1027.9 246.1" stroke="#e41a22" opacity="0.84"/>
<path d="M1039.1 248.7L1035.2 245.7" stroke="#e41a22" opacity="0.90"/>
<path d="M1045.9 249.7L1043.2 244.2" stroke="#e41a22" opacity="0.90"/>
<path d="M1051.2 250.6L1051.3 244.3" stroke="#e41a22" opacity="0.90"/>
<path d="M1056.9 249.6L1059.7 244.6" stroke="#e41a22" opacity="0.90"/>
<path d="M1062.9 248.6L1066.4 245.7" stroke="#e41a22" opacity="0.89"/>
<path d="M1070.9 247.1L1074.0 246.1" stroke="#e41a22" opacity="0.78"/>
<path d="M1077.1 247.6L1079.9 247.4" stroke="#e41a22" opacity="0.75"/>
<path d="M1084.5 246.3L1086.7 246.6" stroke="#e41a22" opacity="0.68"/>
<path d="M1092.2 246.8L1094.3 247.5" stroke="#e41a22" opacity="0.68"/>
<path d="M1120.2 246.1L1121.1 247.0" stroke="#28306e" opacity="0.45"/>
<path d="M975.0 252.3L974.1 253.7" stroke="#d0203a" opacity="0.55"/>
<path d="M988.7 252.4L987.7 253.7" stroke="#d0203a" opacity="0.55"/>
<path d="M1002.9 253.0L1001.7 254.1" stroke="#d0203a" opacity="0.55"/>
<path d="M1010.3 252.0L1008.4 253.2" stroke="#e41a22" opacity="0.67"/>
<path d="M1016.8 252.9L1014.8 253.9" stroke="#e41a22" opacity="0.69"/>
<path d="M1024.9 252.4L1022.1 253.1" stroke="#e41a22" opacity="0.75"/>
<path d="M1032.1 253.0L1028.4 253.0" stroke="#e41a22" opacity="0.83"/>
<path d="M1039.8 253.7L1034.5 251.3" stroke="#e41a22" opacity="0.90"/>
<path d="M1046.2 255.9L1042.3 250.8" stroke="#e41a22" opacity="0.90"/>
<path d="M1050.9 256.0L1050.8 249.8" stroke="#e41a22" opacity="0.90"/>
<path d="M1056.4 255.1L1060.6 250.0" stroke="#e41a22" opacity="0.90"/>
<path d="M1061.9 253.8L1067.0 251.5" stroke="#e41a22" opacity="0.90"/>
<path d="M1070.6 253.0L1074.4 253.0" stroke="#e41a22" opacity="0.83"/>
<path d="M1078.1 252.3L1080.9 253.0" stroke="#e41a22" opacity="0.75"/>
<path d="M1084.9 252.7L1087.1 253.9" stroke="#e41a22" opacity="0.72"/>
<path d="M1092.3 252.2L1094.1 253.4" stroke="#e41a22" opacity="0.65"/>
<path d="M1099.0 252.9L1100.2 254.0" stroke="#d0203a" opacity="0.55"/>
<path d="M1127.2 252.0L1128.0 253.4" stroke="#d0203a" opacity="0.55"/>
<path d="M1134.4 251.9L1135.2 253.3" stroke="#d0203a" opacity="0.55"/>
<path d="M980.7 258.3L980.2 259.5" stroke="#28306e" opacity="0.45"/>
<path d="M988.5 258.2L987.8 259.7" stroke="#d0203a" opacity="0.55"/>
<path d="M995.6 258.9L995.0 260.1" stroke="#28306e" opacity="0.45"/>
<path d="M1002.3 258.0L1001.5 259.3" stroke="#28306e" opacity="0.45"/>
<path d="M1009.9 258.5L1008.6 260.3" stroke="#e41a22" opacity="0.67"/>
<path d="M1016.9 258.1L1015.4 259.8" stroke="#e41a22" opacity="0.69"/>
<path d="M1024.3 257.6L1022.0 259.4" stroke="#e41a22" opacity="0.75"/>
<path d="M1032.2 258.3L1028.4 260.2" stroke="#e41a22" opacity="0.87"/>
<path d="M1069.9 258.0L1073.9 260.0" stroke="#e41a22" opacity="0.89"/>
<path d="M1077.4 258.2L1079.5 259.9" stroke="#e41a22" opacity="0.74"/>
<path d="M1085.6 258.6L1087.1 260.4" stroke="#e41a22" opacity="0.70"/>
<path d="M1091.9 258.2L1093.2 260.0" stroke="#e41a22" opacity="0.67"/>
<path d="M1099.9 258.4L1100.6 259.6" stroke="#28306e" opacity="0.45"/>
<path d="M1106.5 258.8L1107.2 260.3" stroke="#d0203a" opacity="0.55"/>
<path d="M1134.5 258.1L1134.9 259.3" stroke="#28306e" opacity="0.45"/>
<path d="M966.6 264.5L966.5 266.1" stroke="#d0203a" opacity="0.55"/>
<path d="M981.3 264.6L981.1 266.2" stroke="#d0203a" opacity="0.55"/>
<path d="M1002.1 263.8L1001.7 265.4" stroke="#d0203a" opacity="0.55"/>
<path d="M1008.9 263.7L1008.4 265.8" stroke="#e41a22" opacity="0.66"/>
<path d="M1016.2 264.0L1015.6 266.3" stroke="#e41a22" opacity="0.70"/>
<path d="M1023.2 264.0L1022.4 267.0" stroke="#e41a22" opacity="0.77"/>
<path d="M1030.2 263.5L1028.7 267.3" stroke="#e41a22" opacity="0.86"/>
<path d="M1070.6 262.8L1072.5 266.6" stroke="#e41a22" opacity="0.87"/>
<path d="M1078.3 263.1L1079.4 266.1" stroke="#e41a22" opacity="0.78"/>
<path d="M1086.0 263.4L1086.7 265.8" stroke="#e41a22" opacity="0.72"/>
<path d="M1092.9 264.3L1093.3 266.4" stroke="#e41a22" opacity="0.67"/>
<path d="M1100.3 264.3L1100.6 266.4" stroke="#e41a22" opacity="0.65"/>
<path d="M1106.5 264.4L1106.8 266.0" stroke="#d0203a" opacity="0.55"/>
<path d="M1120.5 264.2L1120.7 265.8" stroke="#d0203a" opacity="0.55"/>
<path d="M1127.9 264.2L1128.1 265.8" stroke="#d0203a" opacity="0.55"/>
<path d="M1135.3 264.3L1135.5 265.6" stroke="#28306e" opacity="0.45"/>
<path d="M972.9 277.5L975.1 277.5" stroke="#e41a22" opacity="0.41"/>
<path d="M979.9 277.5L982.1 277.5" stroke="#e41a22" opacity="0.45"/>
<path d="M986.9 277.5L989.1 277.5" stroke="#e41a22" opacity="0.48"/>
<path d="M993.9 277.5L996.1 277.5" stroke="#e41a22" opacity="0.52"/>
<path d="M1000.8 277.5L1003.2 277.5" stroke="#e41a22" opacity="0.57"/>
<path d="M1007.6 277.5L1010.4 277.5" stroke="#e41a22" opacity="0.62"/>
<path d="M1014.3 277.5L1017.7 277.5" stroke="#e41a22" opacity="0.68"/>
<path d="M1024.6 276.3L1021.4 278.7" stroke="#e41a22" opacity="0.74"/>
<path d="M1031.9 276.1L1028.1 278.9" stroke="#e41a22" opacity="0.80"/>
<path d="M1037.0 275.0L1037.0 280.0" stroke="#e41a22" opacity="0.85"/>
<path d="M1044.0 275.0L1044.0 280.0" stroke="#e41a22" opacity="0.89"/>
<path d="M1051.0 275.0L1051.0 280.0" stroke="#e41a22" opacity="0.90"/>
<path d="M1058.0 275.0L1058.0 280.0" stroke="#e41a22" opacity="0.89"/>
<path d="M1065.0 275.0L1065.0 280.0" stroke="#e41a22" opacity="0.85"/>
<path d="M1070.1 276.1L1073.9 278.9" stroke="#e41a22" opacity="0.80"/>
<path d="M1077.4 276.3L1080.6 278.7" stroke="#e41a22" opacity="0.74"/>
<path d="M1084.3 277.5L1087.7 277.5" stroke="#e41a22" opacity="0.68"/>
<path d="M1091.6 277.5L1094.4 277.5" stroke="#e41a22" opacity="0.62"/>
<path d="M1098.8 277.5L1101.2 277.5" stroke="#e41a22" opacity="0.57"/>
<path d="M1105.9 277.5L1108.1 277.5" stroke="#e41a22" opacity="0.52"/>
<path d="M1112.9 277.5L1115.1 277.5" stroke="#e41a22" opacity="0.48"/>
<path d="M1119.9 277.5L1122.1 277.5" stroke="#e41a22" opacity="0.45"/>
<path d="M1126.9 277.5L1129.1 277.5" stroke="#e41a22" opacity="0.41"/>
<path d="M972.9 284.5L975.1 284.5" stroke="#e41a22" opacity="0.41"/>
<path d="M979.9 284.5L982.1 284.5" stroke="#e41a22" opacity="0.45"/>
<path d="M986.9 284.5L989.1 284.5" stroke="#e41a22" opacity="0.48"/>
<path d="M993.9 284.5L996.1 284.5" stroke="#e41a22" opacity="0.52"/>
<path d="M1000.8 284.5L1003.2 284.5" stroke="#e41a22" opacity="0.57"/>
<path d="M1007.6 284.5L1010.4 284.5" stroke="#e41a22" opacity="0.62"/>
<path d="M1014.3 284.5L1017.7 284.5" stroke="#e41a22" opacity="0.68"/>
<path d="M1024.6 283.3L1021.4 285.7" stroke="#e41a22" opacity="0.74"/>
<path d="M1031.9 283.1L1028.1 285.9" stroke="#e41a22" opacity="0.80"/>
<path d="M1037.0 282.0L1037.0 287.0" stroke="#e41a22" opacity="0.85"/>
<path d="M1044.0 282.0L1044.0 287.0" stroke="#e41a22" opacity="0.89"/>
<path d="M1051.0 282.0L1051.0 287.0" stroke="#e41a22" opacity="0.90"/>
<path d="M1058.0 282.0L1058.0 287.0" stroke="#e41a22" opacity="0.89"/>
<path d="M1065.0 282.0L1065.0 287.0" stroke="#e41a22" opacity="0.85"/>
<path d="M1070.1 283.1L1073.9 285.9" stroke="#e41a22" opacity="0.80"/>
<path d="M1077.4 283.3L1080.6 285.7" stroke="#e41a22" opacity="0.74"/>
<path d="M1084.3 284.5L1087.7 284.5" stroke="#e41a22" opacity="0.68"/>
<path d="M1091.6 284.5L1094.4 284.5" stroke="#e41a22" opacity="0.62"/>
<path d="M1098.8 284.5L1101.2 284.5" stroke="#e41a22" opacity="0.57"/>
<path d="M1105.9 284.5L1108.1 284.5" stroke="#e41a22" opacity="0.52"/>
<path d="M1112.9 284.5L1115.1 284.5" stroke="#e41a22" opacity="0.48"/>
<path d="M1119.9 284.5L1122.1 284.5" stroke="#e41a22" opacity="0.45"/>
<path d="M1126.9 284.5L1129.1 284.5" stroke="#e41a22" opacity="0.41"/>
<path d="M1040.0 264.3L1040.0 258.7" stroke="#ee1018" opacity="0.90"/>
<path d="M1040.0 271.3L1040.0 265.7" stroke="#ee1018" opacity="0.90"/>
<path d="M1046.0 264.3L1046.0 258.7" stroke="#ee1018" opacity="0.90"/>
<path d="M1046.0 271.3L1046.0 265.7" stroke="#ee1018" opacity="0.90"/>
<path d="M1056.0 264.3L1056.0 258.7" stroke="#ee1018" opacity="0.90"/>
<path d="M1056.0 271.3L1056.0 265.7" stroke="#ee1018" opacity="0.90"/>
<path d="M1062.0 264.3L1062.0 258.7" stroke="#ee1018" opacity="0.90"/>
<path d="M1062.0 271.3L1062.0 265.7" stroke="#ee1018" opacity="0.90"/>
</g>
<g font-family="Liberation Sans" font-size="13" fill="#111">
<text x="846" y="99" letter-spacing="0.5">10</text>
<text x="850.5" y="188.5" letter-spacing="0.5">5</text>
<text x="850.5" y="278.5" letter-spacing="0.5">0</text>
<text x="849" y="370" letter-spacing="0.5">-5</text>
<text x="844.5" y="460" letter-spacing="0.5">-10</text>
<text x="861" y="476" letter-spacing="0.5">-10</text>
<text x="955" y="475.5" letter-spacing="0.5">-5</text>
<text x="1047.5" y="476" letter-spacing="0.5">0</text>
<text x="1137" y="476" letter-spacing="0.5">5</text>
<text x="1216.5" y="455" letter-spacing="0.5">-10</text>
<text x="1222" y="462.5" letter-spacing="0.5">-5</text>
<text x="1231" y="466.5" letter-spacing="0.5">0</text>
<text x="1236" y="471" letter-spacing="0.5">5</text>
<text x="1223.5" y="475.5" letter-spacing="0.5">10</text>
<text x="1239" y="475" letter-spacing="0.5">10</text>
</g>
<path d="M713 449V428" stroke="#0000e0" stroke-width="2.2"/><path d="M710 429L713 420.5L716.3 429Z" fill="#0000e0"/>
<path d="M713 450H734" stroke="#10e010" stroke-width="2.2"/><path d="M733.5 446.5L741.8 450L733.5 453.3Z" fill="#10e010"/>
<path d="M710.8 447.6L715.2 452M715.2 447.6L710.8 452" stroke="#d01010" stroke-width="1.6"/>
<text x="710" y="416" font-family="Liberation Sans" font-size="13" fill="#111">z</text>
<text x="746" y="452" font-family="Liberation Sans" font-size="13" fill="#111">y</text>
<rect x="1351.5" y="134.5" width="15" height="326" fill="url(#cbar)" stroke="#222" stroke-width="1"/>
<g stroke="#222" stroke-width="1">
<path d="M1351 147.5H1354.5M1363.5 147.5H1367"/>
<path d="M1351 199.7H1354.5M1363.5 199.7H1367"/>
<path d="M1351 251.9H1354.5M1363.5 251.9H1367"/>
<path d="M1351 304.1H1354.5M1363.5 304.1H1367"/>
<path d="M1351 356.3H1354.5M1363.5 356.3H1367"/>
<path d="M1351 408.5H1354.5M1363.5 408.5H1367"/>
</g>
<g font-family="Liberation Sans" font-size="13" fill="#111">
<text x="1374" y="152.0" letter-spacing="0.4">1.2</text>
<text x="1374" y="204.2" letter-spacing="0.4">1</text>
<text x="1374" y="256.4" letter-spacing="0.4">0.8</text>
<text x="1374" y="308.6" letter-spacing="0.4">0.6</text>
<text x="1374" y="360.8" letter-spacing="0.4">0.4</text>
<text x="1374" y="413.0" letter-spacing="0.4">0.2</text>
<path d="M1338 108.3L1343.2 100L1348.4 108.3Z" fill="#111"/>
<text x="1353.5" y="109" textLength="27" lengthAdjust="spacing">1.25</text>
<path d="M1338 473L1348.3 473L1343.2 482Z" fill="#111"/>
<text x="1353.5" y="482" textLength="53" lengthAdjust="spacing">5.47×10</text>
<text x="1408" y="476.5" font-size="9.5">-6</text>
</g>
</svg>

<!-- tab X -->
<svg style="left:865px;top:15px" width="10" height="10"><path d="M0.8 0.8L8.8 8.8M8.8 0.8L0.8 8.8" stroke="#777" stroke-width="1.4"/></svg>
<svg style="left:1403px;top:14px" width="10" height="6"><path d="M0.5 0.5H9L4.75 5Z" fill="#6a6a6a"/></svg>
<svg style="left:1417px;top:11px" width="10" height="14"><rect x="2.5" y="0.7" width="4.5" height="6.8" fill="#6a6a6a"/><rect x="0.8" y="7" width="8" height="1.5" fill="#6a6a6a"/><rect x="4.2" y="8.5" width="1.2" height="5" fill="#9a9a9a"/></svg>
<!-- zoom in -->
<svg style="left:677px;top:38px" width="16" height="15"><circle cx="6" cy="5.8" r="4.6" fill="#fff" stroke="#555" stroke-width="1.5"/><path d="M3.7 5.8H8.3M6 3.5V8.1" stroke="#555" stroke-width="1.2"/><path d="M9.3 9.2L13.6 13.3" stroke="#555" stroke-width="2.2"/></svg>
<!-- zoom out -->
<svg style="left:701px;top:38px" width="16" height="15"><circle cx="6" cy="5.8" r="4.6" fill="#fff" stroke="#555" stroke-width="1.5"/><path d="M3.7 5.8H8.3" stroke="#555" stroke-width="1.2"/><path d="M9.3 9.2L13.6 13.3" stroke="#555" stroke-width="2.2"/></svg>
<!-- zoom box -->
<svg style="left:724px;top:38px" width="18" height="15"><circle cx="10" cy="5.5" r="4.3" fill="none" stroke="#aaa" stroke-width="1.3"/><path d="M13 8.7L16.5 12.5" stroke="#aaa" stroke-width="2"/><rect x="1" y="5" width="8" height="7.5" fill="none" stroke="#445" stroke-width="1" stroke-dasharray="1.5 1"/><path d="M8 5.5H12M10 3.5V7.5" stroke="#666" stroke-width="1"/></svg>
<!-- zoom extents -->
<svg style="left:749px;top:37px" width="16" height="16"><rect x="0.5" y="0.5" width="14.5" height="14.5" fill="#fff" stroke="#4a5872" stroke-width="1"/><path d="M7.75 4.5V11M4.5 7.75H11" stroke="#4a5872" stroke-width="1.2"/><path d="M6 3.5L7.75 1.8L9.5 3.5ZM6 12L7.75 13.7L9.5 12ZM3.5 6L1.8 7.75L3.5 9.5ZM12 6L13.7 7.75L12 9.5Z" fill="#4a5872"/></svg>
<div class="abs" style="left:775px;top:37px;width:1px;height:17px;background:#d6d8de"></div>
<!-- axes -->
<svg style="left:788px;top:37px" width="18" height="15"><path d="M7.8 13.5V1.5M6.2 3.2L7.8 1L9.4 3.2" stroke="#4a6694" stroke-width="1" fill="none"/><path d="M7.8 13.5L1.5 7.5M1.5 10L1.5 7.5L4 7.6" stroke="#4f9a5a" stroke-width="1" fill="none"/><path d="M7.8 13.5L17 8.2M14.3 7.8L17 8.2L15.8 10.6" stroke="#c83c64" stroke-width="1" fill="none"/></svg>
<svg style="left:812px;top:42px" width="9" height="6"><path d="M0.8 0.8H8.2L4.5 5Z" fill="#111"/></svg>
<!-- xy yz zx -->
<svg style="left:833px;top:37px" width="16" height="16"><path d="M1.5 14.5V1.5M0.3 3.3L1.5 1L2.7 3.3" stroke="#5e8f5a" stroke-width="1" fill="none"/><path d="M1.5 14.5H15M13 13.3L15.3 14.5L13 15.7" stroke="#5c7aa6" stroke-width="1" fill="none"/></svg>
<div class="t" style="left:836px;top:36px;font-size:11px;color:#6a6a6a;line-height:12px;letter-spacing:-0.3px">xy</div>
<svg style="left:857px;top:37px" width="16" height="16"><path d="M1.5 14.5V1.5M0.3 3.3L1.5 1L2.7 3.3" stroke="#5c7aa6" stroke-width="1" fill="none"/><path d="M1.5 14.5H15M13 13.3L15.3 14.5L13 15.7" stroke="#5e8f5a" stroke-width="1" fill="none"/></svg>
<div class="t" style="left:860px;top:36px;font-size:11px;color:#6a6a6a;line-height:12px;letter-spacing:-0.3px">yz</div>
<svg style="left:881px;top:37px" width="16" height="16"><path d="M1.5 14.5V1.5M0.3 3.3L1.5 1L2.7 3.3" stroke="#b03a48" stroke-width="1" fill="none"/><path d="M1.5 14.5H15M13 13.3L15.3 14.5L13 15.7" stroke="#5c7aa6" stroke-width="1" fill="none"/></svg>
<div class="t" style="left:884px;top:36px;font-size:11px;color:#6a6a6a;line-height:12px;letter-spacing:-0.3px">zx</div>
<div class="abs" style="left:906px;top:37px;width:1px;height:17px;background:#d6d8de"></div>
<!-- toggle buttons -->
<div class="abs" style="left:918px;top:36px;width:19px;height:18px;border:1px solid #5b7fb5;border-radius:2px;background:#a9cdf2"></div>
<svg style="left:921px;top:39px" width="14" height="12"><path d="M1 3.5H5L10 0.8V11.2L5 8.5H1Z" fill="#3f6ba6"/><path d="M10.5 3Q13 6 10.5 9" stroke="#3f6ba6" stroke-width="1" fill="none"/></svg>
<div class="abs" style="left:943px;top:36px;width:18px;height:18px;border:1px solid #5b7fb5;border-radius:2px;background:#a9cdf2"></div>
<svg style="left:946px;top:39px" width="13" height="12"><rect x="0.5" y="0.5" width="9" height="7.5" fill="none" stroke="#4a5a78" stroke-width="1"/><rect x="3.5" y="3.5" width="9" height="8" fill="#b8d4f0" stroke="#4a5a78" stroke-width="1"/></svg>
<div class="abs" style="left:970px;top:37px;width:1px;height:17px;background:#d6d8de"></div>
<!-- camera -->
<svg style="left:983px;top:38px" width="18" height="14"><path d="M0.8 3H5L6.5 0.8H11L12.5 3H16.5V12.8H0.8Z" fill="#3f73b5"/><circle cx="8.7" cy="7.8" r="3.3" fill="#fff"/><circle cx="8.7" cy="7.8" r="2" fill="#3f73b5"/></svg>
<!-- printer -->
<svg style="left:1008px;top:36px" width="16" height="18"><rect x="3" y="0.8" width="10" height="5" fill="#fff" stroke="#3f73b5" stroke-width="1.3"/><path d="M0.5 5.5H15.5V13.5H0.5Z" fill="#3f73b5"/><rect x="3" y="12" width="10" height="4.8" fill="#fff" stroke="#3f73b5" stroke-width="1.3"/><rect x="11" y="9" width="1.5" height="1.5" fill="#fff"/></svg>

<!-- ============ MESSAGES PANEL ============ -->
<div class="panel" style="left:670px;top:499px;width:762px;height:185px"></div>
<div class="tabline" style="left:671px;top:528px;width:760px"></div>
<div class="tab" style="left:675px;top:506px;width:86px;height:23px;color:#3f5f8c"><span class="abs" style="left:7px;top:4px">Messages</span></div>
<div class="itab" style="left:765px;top:507px;width:62px;height:21px"><span class="abs" style="left:6px;top:2px">Progress</span></div>
<div class="itab" style="left:831px;top:507px;width:32px;height:21px"><span class="abs" style="left:6px;top:2px">Log</span></div>

<!-- messages tools -->
<svg style="left:745px;top:514px" width="10" height="10"><path d="M0.8 0.8L8.8 8.8M8.8 0.8L0.8 8.8" stroke="#777" stroke-width="1.4"/></svg>
<svg style="left:1382px;top:513px" width="10" height="6"><path d="M0.5 0.5H9L4.75 5Z" fill="#6a6a6a"/></svg>
<svg style="left:1397px;top:510px" width="10" height="14"><rect x="2.5" y="0.7" width="4.5" height="6.8" fill="#6a6a6a"/><rect x="0.8" y="7" width="8" height="1.5" fill="#6a6a6a"/><rect x="4.2" y="8.5" width="1.2" height="5" fill="#9a9a9a"/></svg>
<svg style="left:1411px;top:512px" width="11" height="10"><path d="M0.8 0.6L10.2 9.4M10.2 0.6L0.8 9.4" stroke="#444" stroke-width="1.4"/></svg>
<!-- broom -->
<svg style="left:679px;top:535px" width="13" height="18"><path d="M1.8 1.5L4.8 9" stroke="#666" stroke-width="1.5"/><path d="M3.5 9L6.3 8.2L11 14.5L5 16Z" fill="#f4dcc0" stroke="#b88a60" stroke-width="1"/></svg>
<!-- text area -->
<div class="abs" style="left:675px;top:555px;width:1px;height:124px;background:#d3d5da"></div>
<div class="abs" style="left:754px;top:557px;width:5px;height:1.5px;background:#222;transform:rotate(-15deg)"></div>
<div class="abs" style="left:679px;top:559px;line-height:15px;white-space:nowrap">
Solution time (Study 1): 8 s.<br>
Complete mesh consists of 216609 domain elements, 10552 boundary elements, and 548 edge elements.<br>
Complete mesh consists of 36456 domain elements, 4246 boundary elements, and 388 edge elements.<br>
Number of degrees of freedom solved for: 52524.<br>
Solution time (Study 1): 2 s.<br>
Number of degrees of freedom solved for: 52524.<br>
Solution time (Study 1): 3 s.<br>
Saved file: Magnet and Steel Plate_3_Contact.mph</div>
<!-- v-scrollbar -->
<div class="abs" style="left:1409px;top:555px;width:1px;height:124px;background:#d6d8dc"></div>
<div class="abs" style="left:1414px;top:557px;width:17px;height:122px;background:linear-gradient(90deg,#ebebec,#e4e4e6)"></div>
<svg style="left:1418px;top:562px" width="8" height="6"><path d="M1 5H7L4 1Z" fill="#555"/></svg>
<div class="abs" style="left:1415px;top:653px;width:15px;height:7px;border:1px solid #7a7a7a;border-radius:1px;background:linear-gradient(90deg,#fafafa,#d8d8d8)"></div>
<svg style="left:1418px;top:667px" width="8" height="6"><path d="M1 1H7L4 5Z" fill="#555"/></svg>

</body></html>
